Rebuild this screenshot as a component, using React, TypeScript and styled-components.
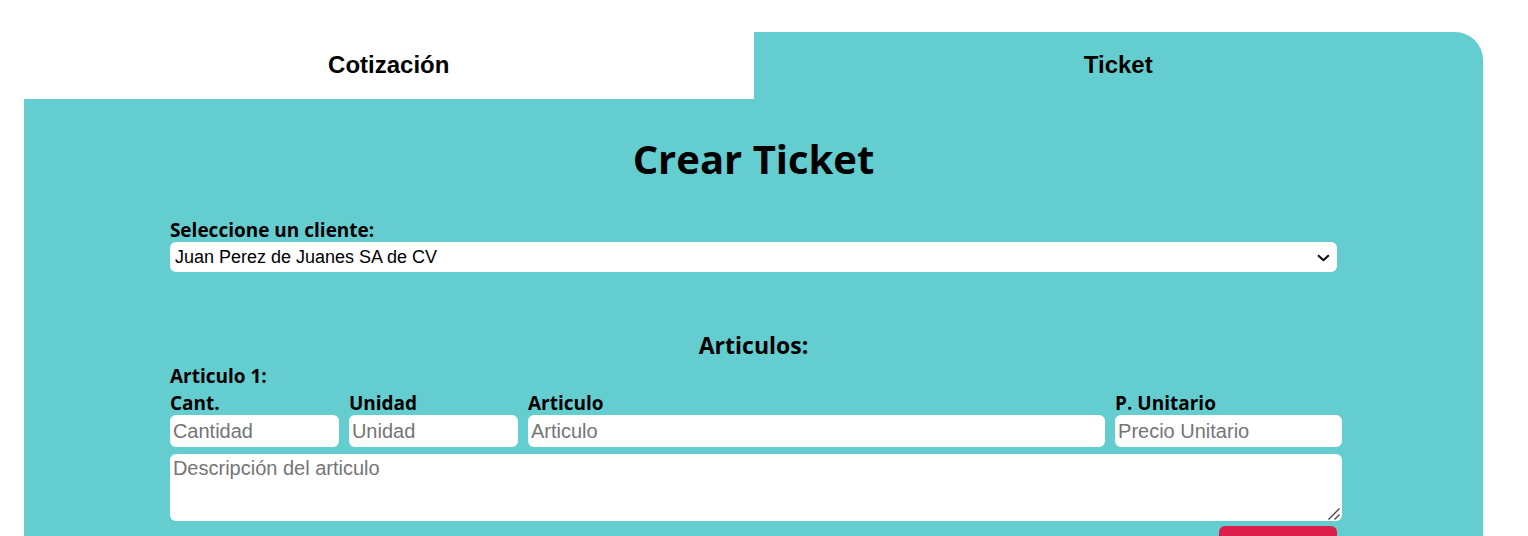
import React, { useState } from "react";
import styled, { createGlobalStyle } from "styled-components";

const teal = "#64cdd0";
const heading = '"Open Sans", "Noto Sans", sans-serif';
const control = '"Liberation Sans", Arial, sans-serif';

const GlobalStyle = createGlobalStyle`
  * { box-sizing: border-box; }
  body { margin: 0; background: #fff; color: #000; }
`;

const Page = styled.div`
  display: flex;
  height: 100vh;
  overflow: hidden;
  padding: 32px 45px 0 24px;
`;

const Card = styled.main`
  flex: 1;
  min-width: 0;
`;

const Tabs = styled.nav`
  display: grid;
  grid-template-columns: 1fr 1fr;
`;

const Tab = styled.button<{ $active: boolean }>`
  height: 67px;
  border: 0;
  padding: 0 0 2px;
  border-radius: 0 28px 0 0;
  background: ${(p) => (p.$active ? teal : "#fff")};
  color: #000;
  font: bold 24px/28px ${control};
  cursor: pointer;
`;

const Panel = styled.section`
  min-height: 100vh;
  padding-top: 32px;
  background: ${teal};
`;

const Form = styled.form`
  width: 80%;
  margin: 0 auto;
  font-family: ${heading};
`;

const Title = styled.h1`
  margin: 0 0 31px;
  font-size: 40px;
  line-height: 56px;
  font-weight: 700;
  text-align: center;
`;

const Field = styled.div`
  display: flex;
  flex-direction: column;
  min-width: 0;
`;

const Label = styled.label`
  font-size: 19px;
  line-height: 24px;
  font-weight: 700;
`;

const ControlBox = styled.div`
  position: relative;
`;

const Select = styled.select`
  display: block;
  appearance: none;
  width: 100%;
  height: 30px;
  border: 0;
  border-radius: 6px;
  padding: 0 32px 0 5px;
  background-color: #fff;
  color: #000;
  font: 18px ${control};
`;

const Chevron = styled.svg`
  position: absolute;
  right: 6px;
  top: 11px;
  pointer-events: none;
`;

const Grip = styled.svg`
  position: absolute;
  right: 1px;
  bottom: 0;
  pointer-events: none;
`;

const Subtitle = styled.h2`
  margin: 58px 0 4px;
  font-size: 23px;
  line-height: 30px;
  font-weight: 700;
  text-align: center;
`;

const ItemTitle = styled.h3`
  margin: 0 0 3px;
  font-size: 19px;
  line-height: 24px;
  font-weight: 700;
`;

const Item = styled.div`
  margin-right: -5px;
`;

const ItemRow = styled.div`
  display: grid;
  grid-template-columns: 169fr 169fr 577fr 227fr;
  gap: 10px;
  margin-bottom: 7px;
`;

const Input = styled.input`
  width: 100%;
  height: 32px;
  border: 0;
  border-radius: 6px;
  padding: 0 3px;
  background: #fff;
  font: 20px ${control};
  &::placeholder { color: #757575; }
`;

const Description = styled.textarea`
  display: block;
  width: 100%;
  height: 67px;
  border: 0;
  border-radius: 6px;
  padding: 2px 3px;
  background: #fff;
  font: 20px/24px ${control};
  &::placeholder { color: #757575; }
  &::-webkit-resizer { background: transparent; }
`;

const Actions = styled.div`
  display: flex;
  justify-content: flex-end;
  margin-top: 5px;
`;

const DeleteButton = styled.button`
  width: 118px;
  height: 40px;
  border: 0;
  border-radius: 6px;
  background: #dc1f4a;
  cursor: pointer;
`;

const fields = [
  { id: "cantidad", label: "Cant.", placeholder: "Cantidad" },
  { id: "unidad", label: "Unidad", placeholder: "Unidad" },
  { id: "articulo", label: "Articulo", placeholder: "Articulo" },
  { id: "precio", label: "P. Unitario", placeholder: "Precio Unitario" },
];

export default function App() {
  const [tab, setTab] = useState("Ticket");
  return (
    <>
      <GlobalStyle />
      <Page>
        <Card>
          <Tabs>
            {["Cotización", "Ticket"].map((name) => (
              <Tab key={name} type="button" $active={tab === name} onClick={() => setTab(name)}>
                {name}
              </Tab>
            ))}
          </Tabs>
          <Panel>
            <Form onSubmit={(e) => e.preventDefault()}>
              <Title>Crear {tab}</Title>
              <Field>
                <Label htmlFor="cliente">Seleccione un cliente:</Label>
                <ControlBox>
                  <Select id="cliente">
                    <option>Juan Perez de Juanes SA de CV</option>
                  </Select>
                  <Chevron width="15" height="10" viewBox="0 0 15 10" aria-hidden="true">
                    <path d="M2 2.2 7.4 7.2 12.8 2.2" fill="none" stroke="#000" strokeWidth="2" />
                  </Chevron>
                </ControlBox>
              </Field>
              <Subtitle>Articulos:</Subtitle>
              <ItemTitle>Articulo 1:</ItemTitle>
              <Item>
                <ItemRow>
                  {fields.map((f) => (
                    <Field key={f.id}>
                      <Label htmlFor={f.id}>{f.label}</Label>
                      <Input id={f.id} placeholder={f.placeholder} />
                    </Field>
                  ))}
                </ItemRow>
                <ControlBox>
                  <Description aria-label="Descripción del articulo" placeholder="Descripción del articulo" />
                  <Grip width="14" height="14" viewBox="0 0 14 14" aria-hidden="true">
                    <path d="M1.5 12.5 12.5 1.5M7.5 12.5 12.5 7.5" fill="none" stroke="#444" strokeWidth="1.4" />
                  </Grip>
                </ControlBox>
              </Item>
              <Actions>
                <DeleteButton type="button" aria-label="Eliminar articulo" />
              </Actions>
            </Form>
          </Panel>
        </Card>
      </Page>
    </>
  );
}
